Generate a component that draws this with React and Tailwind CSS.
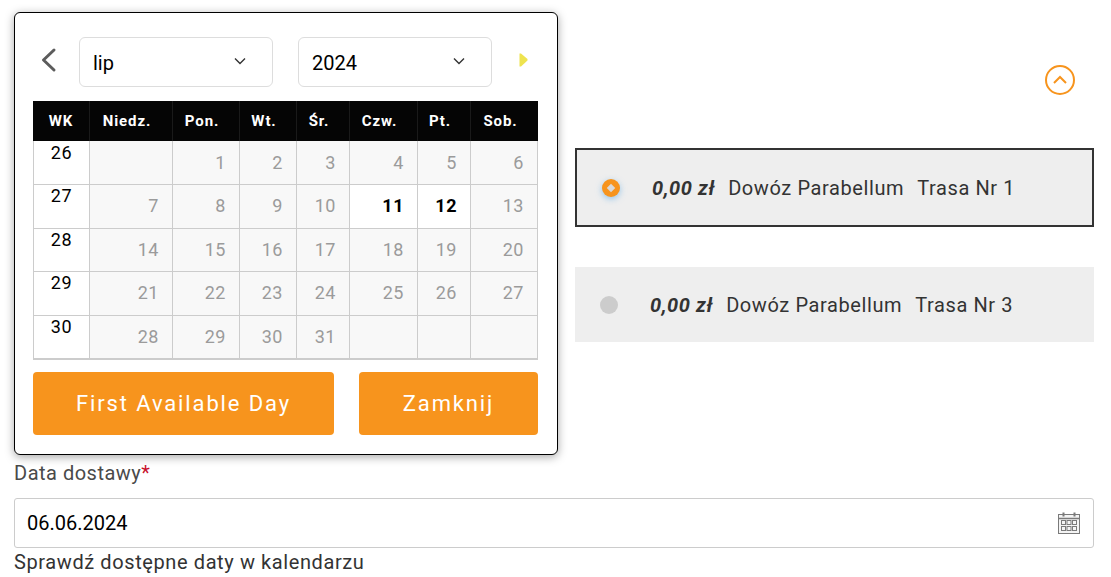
import React from 'react';

const headers = ['WK', 'Niedz.', 'Pon.', 'Wt.', 'Śr.', 'Czw.', 'Pt.', 'Sob.'];

const weeks = [
  { wk: 26, h: 'h-[43px]', lead: 'leading-[24px]', days: ['', 1, 2, 3, 4, 5, 6] },
  { wk: 27, h: 'h-[44px]', lead: 'leading-[21px]', days: [7, 8, 9, 10, 11, 12, 13] },
  { wk: 28, h: 'h-[43px]', lead: 'leading-[21px]', days: [14, 15, 16, 17, 18, 19, 20] },
  { wk: 29, h: 'h-[44px]', lead: 'leading-[22px]', days: [21, 22, 23, 24, 25, 26, 27] },
  { wk: 30, h: 'h-[43px]', lead: 'leading-[21px]', days: [28, 29, 30, 31, '', '', ''] },
];

const gridCols = 'grid grid-cols-[57px_83px_67px_57px_53px_68px_53px_67px]';

const Chevron = () => (
  <svg width="14" height="14" viewBox="0 0 14 14" fill="none" stroke="#333" strokeWidth="1.4">
    <path d="M2 4.5 L7 9.5 L12 4.5" />
  </svg>
);

const Select = ({ value }) => (
  <div className="flex h-[50px] w-[194px] items-center justify-between rounded-md border border-[#dddddd] bg-white pl-[13px] pr-[25px] text-[20px] text-black">
    <span className="pt-[2px]">{value}</span>
    <span className="-mt-[3px] flex"><Chevron /></span>
  </div>
);

const Calendar = () => (
  <div className="absolute left-[14px] top-[12px] z-10 h-[443px] w-[544px] rounded-md border border-black bg-white pl-[18px] pr-[19px] pt-[24px] shadow-[0_2px_10px_rgba(0,0,0,0.35)]">
    <div className="flex h-[50px] items-center">
      <svg className="ml-[7px] mr-[22px] -mt-[5px]" width="17" height="26" viewBox="0 0 17 26" fill="none" stroke="#5c5c5c" strokeWidth="3" strokeLinecap="round" strokeLinejoin="round">
        <path d="M14 3 L3.5 13 L14 23" />
      </svg>
      <Select value="lip" />
      <div className="w-[25px]" />
      <Select value="2024" />
      <svg className="ml-[27px] -mt-[4px]" width="9" height="14" viewBox="0 0 9 14" fill="#eee34f">
        <path d="M0.5 0.5 H2 L8.5 6 V7.5 L2 13.5 H0.5 Z" />
      </svg>
    </div>

    <div className="mt-[14px] w-[505px]">
      <div className={`${gridCols} h-[40px] bg-[#050505]`}>
        {headers.map((h, i) => (
          <div
            key={h}
            className={`flex items-center justify-center border-r border-[#1a1a1a] text-[15px] font-bold tracking-[0.06em] text-white last:border-r-0 ${
              i > 0 ? 'pr-[8px]' : ''
            }`}
          >
            {h}
          </div>
        ))}
      </div>
      <div className="border-b-2 border-[#cccccc]">
        {weeks.map((w, i) => (
          <div key={w.wk} className={`${gridCols} ${w.h} ${i > 0 ? 'border-t border-[#cccccc]' : ''}`}>
            <div className={`border-x border-[#cccccc] bg-white text-center text-[18px] tracking-[0.03em] text-black ${w.lead}`}>
              {w.wk}
            </div>
            {w.days.map((d, j) => {
              const active = d === 11 || d === 12;
              return (
                <div
                  key={j}
                  className={`flex items-center justify-end border-r border-[#cccccc] pr-[13px] text-[18px] tracking-[0.03em] ${
                    i > 0 ? 'pb-[2px]' : ''
                  } ${active ? 'bg-white font-bold text-black' : 'bg-[#f8f8f8] text-[#9b9b9b]'}`}
                >
                  {d}
                </div>
              );
            })}
          </div>
        ))}
      </div>
    </div>

    <div className="mt-[12px] flex w-[505px] justify-between">
      <button className="h-[63px] w-[301px] rounded bg-[#f7941d] text-[22px] tracking-[0.085em] text-white">
        First Available Day
      </button>
      <button className="h-[63px] w-[179px] rounded bg-[#f7941d] text-[22px] tracking-[0.085em] text-white">
        Zamknij
      </button>
    </div>
  </div>
);

const Price = ({ route }) => (
  <>
    <span className="font-bold italic">0,00 zł</span>
    <span className="ml-[13px]">Dowóz Parabellum</span>
    <span className="ml-[13px]">{route}</span>
  </>
);

const CalendarIcon = () => (
  <svg width="22" height="22" viewBox="0 0 22 22" fill="none" stroke="#7a7a7a" strokeWidth="1">
    <rect x="0.5" y="2.5" width="21" height="19" fill="#f4f4f4" />
    <path d="M0.5 6.5 H21.5" strokeWidth="1.5" />
    <path d="M5.5 0.5 V4.5 M16.5 0.5 V4.5" strokeWidth="2" />
    <rect x="3.5" y="8.5" width="4" height="4" />
    <rect x="9" y="8.5" width="4" height="4" />
    <rect x="14.5" y="8.5" width="4" height="4" />
    <rect x="3.5" y="14.5" width="4" height="4" />
    <rect x="9" y="14.5" width="4" height="4" />
    <rect x="14.5" y="14.5" width="4" height="4" />
  </svg>
);

export default function App() {
  return (
    <div className="relative h-[577px] w-[1111px] overflow-hidden bg-white pl-[14px] pr-[17px] font-['Roboto',sans-serif]">
      <Calendar />

      <div className="ml-[561px] flex flex-col pt-[65px]">
        <div className="flex h-[30px] justify-end pr-[19px]">
          <div className="flex h-[30px] w-[30px] items-center justify-center rounded-full border-2 border-[#f7941d]">
            <svg width="16" height="10" viewBox="0 0 16 10" fill="none" stroke="#f7941d" strokeWidth="2">
              <path d="M2 8 L8 2 L14 8" />
            </svg>
          </div>
        </div>

        <div className="mt-[53px] flex h-[79px] items-center border-2 border-[#333333] bg-[#eeeeee] pl-[25px] text-[20px] tracking-[0.03em] text-[#333333]">
          <div className="mr-[32px] flex h-[18px] w-[18px] items-center justify-center rounded-full bg-[#f7941d] shadow-[0_2px_6px_rgba(90,170,230,0.6)]">
            <div className="h-[6px] w-[6px] rotate-45 bg-[#d9d9d9]" />
          </div>
          <Price route="Trasa Nr 1" />
        </div>

        <div className="mt-[40px] flex h-[75px] items-center bg-[#eeeeee] pl-[25px] text-[20px] tracking-[0.03em] text-[#333333]">
          <div className="mr-[32px] h-[18px] w-[18px] rounded-full bg-[#cccccc]" />
          <Price route="Trasa Nr 3" />
        </div>
      </div>

      <div className="mt-[120px] text-[20px] leading-[22px] tracking-[0.025em] text-[#4a4a4a]">
        Data dostawy<span className="text-[#c8102e]">*</span>
      </div>
      <div className="mt-[14px] flex h-[50px] items-center justify-between rounded-[3px] border border-[#cccccc] bg-white pl-[12px] pr-[13px] text-[20px] text-black">
        <span>06.06.2024</span>
        <CalendarIcon />
      </div>
      <div className="mt-[2px] text-[20px] leading-[24px] tracking-[0.03em] text-[#333333]">
        Sprawdź dostępne daty w kalendarzu
      </div>
    </div>
  );
}
